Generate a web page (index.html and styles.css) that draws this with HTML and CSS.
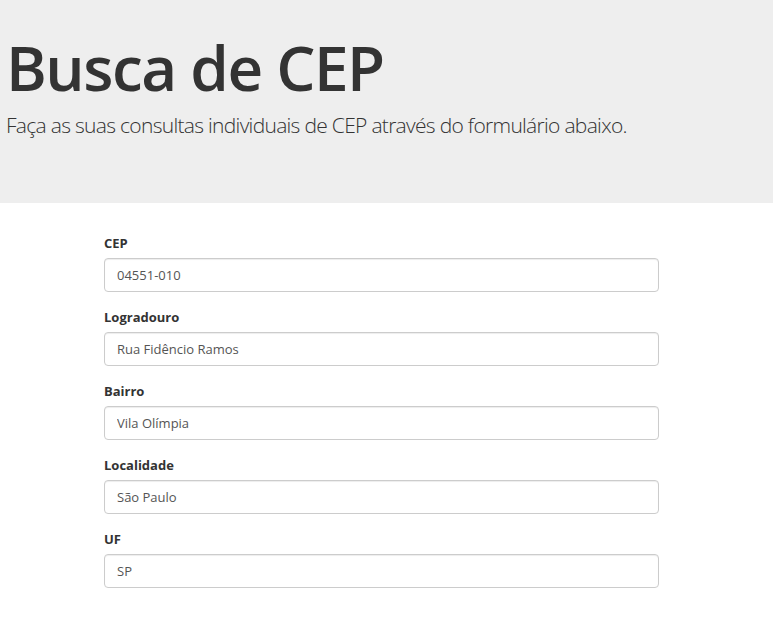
FILE: index.html
```html
<!DOCTYPE html>
<html lang="pt-BR">
<head>
<meta charset="utf-8">
<title>Busca de CEP</title>
<link rel="stylesheet" href="styles.css">
</head>
<body>
<header class="jumbotron">
  <h1 class="title">Busca de CEP</h1>
  <p class="lead">Faça as suas consultas individuais de CEP através do formulário abaixo.</p>
</header>
<main class="content">
  <form class="cep-form">
    <div class="form-group">
      <label class="form-label" for="cep">CEP</label>
      <input class="form-control" id="cep" type="text" value="04551-010">
    </div>
    <div class="form-group">
      <label class="form-label" for="logradouro">Logradouro</label>
      <input class="form-control" id="logradouro" type="text" value="Rua Fidêncio Ramos">
    </div>
    <div class="form-group">
      <label class="form-label" for="bairro">Bairro</label>
      <input class="form-control" id="bairro" type="text" value="Vila Olímpia">
    </div>
    <div class="form-group">
      <label class="form-label" for="localidade">Localidade</label>
      <input class="form-control" id="localidade" type="text" value="São Paulo">
    </div>
    <div class="form-group">
      <label class="form-label" for="uf">UF</label>
      <input class="form-control" id="uf" type="text" value="SP">
    </div>
  </form>
</main>
</body>
</html>
```

FILE: styles.css
```css
html, body {
  margin: 0;
  padding: 0;
  background: #fff;
}
body {
  font-family: "Open Sans", "Noto Sans", sans-serif;
  font-size: 14px;
  line-height: 20px;
  color: #333;
}
.jumbotron {
  background: #eee;
  height: 203px;
  box-sizing: border-box;
  padding: 33px 0 0 6px;
}
.title {
  margin: 0;
  font-size: 62px;
  line-height: 69px;
  font-weight: 600;
  letter-spacing: -1.5px;
  color: #333;
}
.lead {
  margin: 8px 0 0;
  font-size: 21px;
  line-height: 30px;
  font-weight: 300;
  letter-spacing: -0.7px;
  color: #333;
}
.content {
  padding: 30px 0 0 104px;
}
.cep-form {
  width: 555px;
}
.form-group {
  margin-bottom: 15px;
}
.form-label {
  display: block;
  margin-bottom: 5px;
  font-weight: 700;
  font-size: 13px;
}
.form-control {
  display: block;
  width: 100%;
  height: 34px;
  box-sizing: border-box;
  padding: 6px 12px;
  font-family: inherit;
  font-size: 13px;
  line-height: 20px;
  color: #555;
  background: #fff;
  border: 1px solid #ccc;
  border-radius: 4px;
  box-shadow: inset 0 1px 1px rgba(0,0,0,.075);
}
```
